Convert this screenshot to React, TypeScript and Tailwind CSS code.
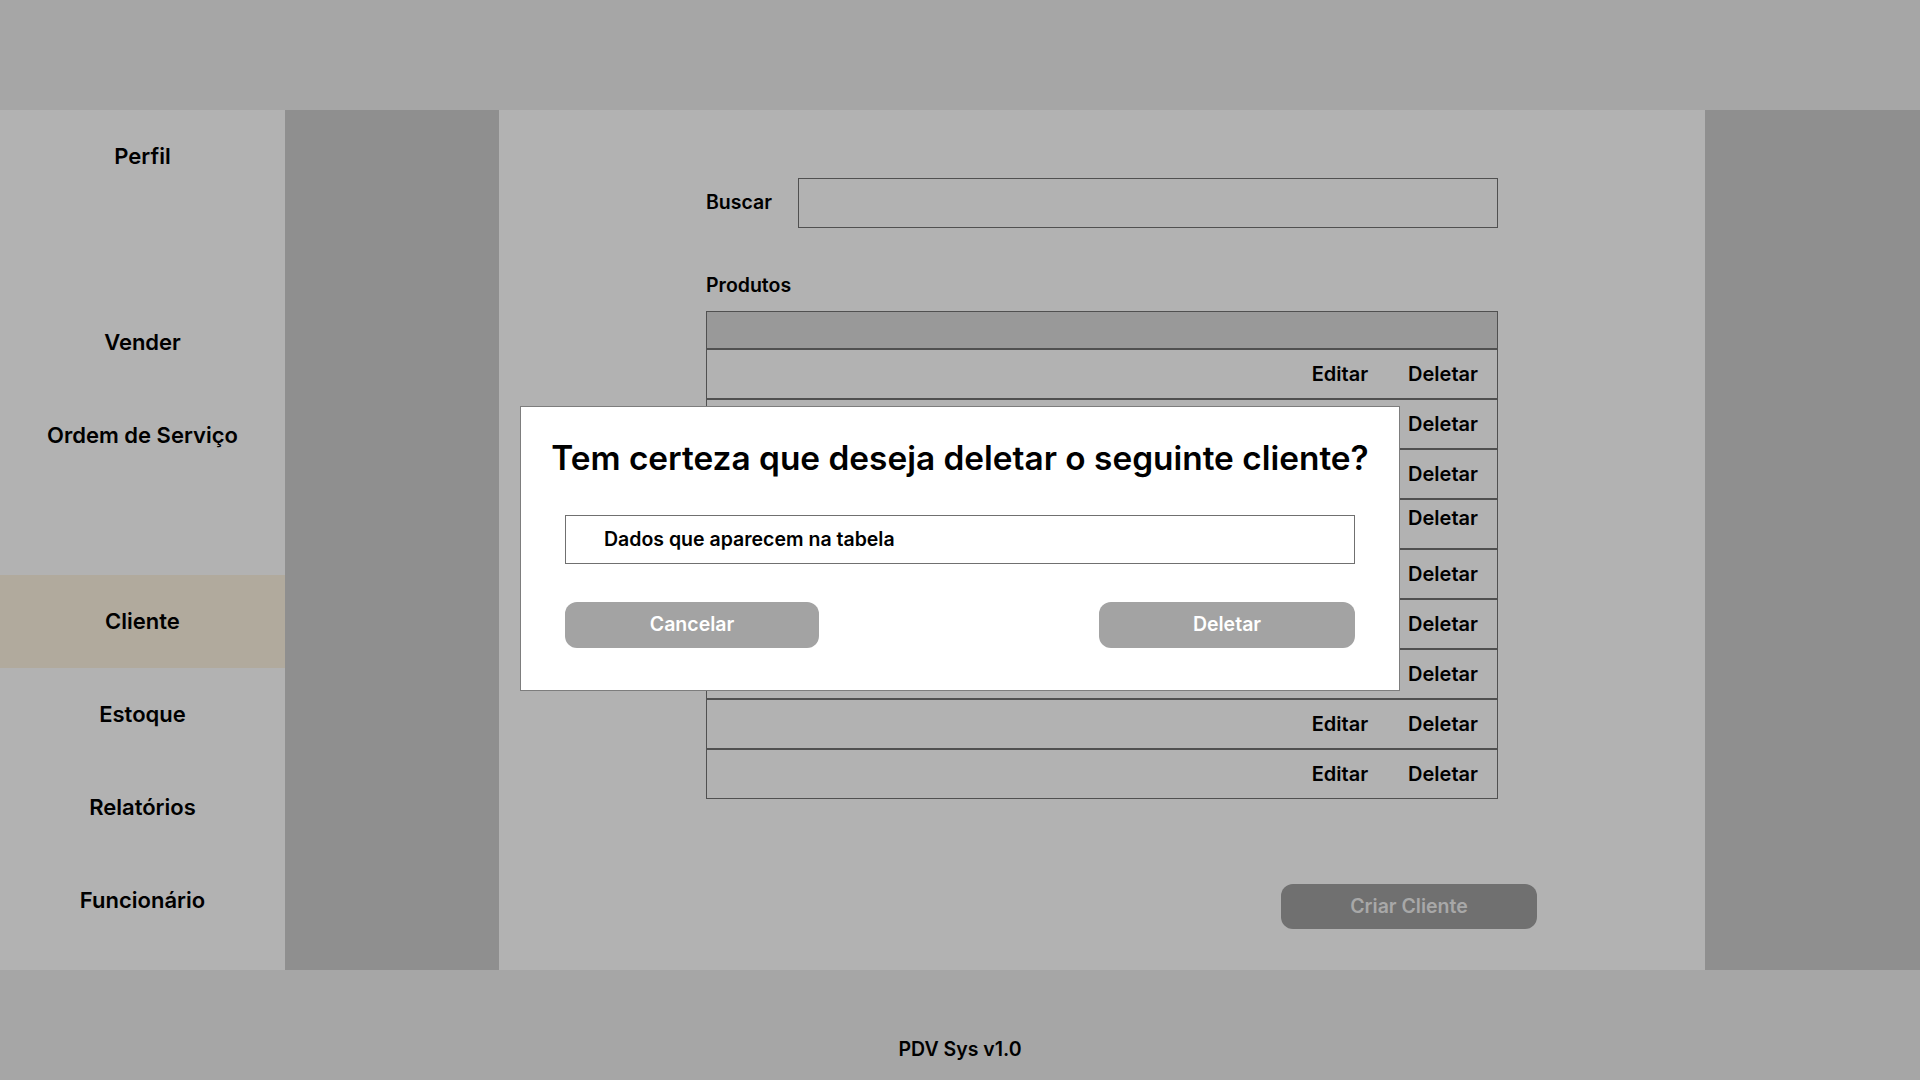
import React from "react";

type NavItem = {
	label: string;
	active?: boolean;
};

const navItems: NavItem[] = [
	{ label: "Perfil" },
	{ label: "" },
	{ label: "Vender" },
	{ label: "Ordem de Serviço" },
	{ label: "" },
	{ label: "Cliente", active: true },
	{ label: "Estoque" },
	{ label: "Relatórios" },
	{ label: "Funcionário" },
];

// rows hidden by the modal only show "Deletar" because the modal covers them
const rows = [0, 1, 2, 3, 4, 5, 6, 7, 8];

const Sidebar = () => {
	return (
		<aside className="flex w-[285px] shrink-0 flex-col bg-[#b2b2b2]">
			{navItems.map((item, i) => (
				<div
					key={i}
					className={`flex h-[93px] items-center justify-center text-[22px] font-semibold text-black ${
						item.active ? "bg-[#b1aa9d]" : ""
					}`}
				>
					{item.label}
				</div>
			))}
		</aside>
	);
};

const TableRow = ({ index }: { index: number }) => {
	return (
		<div
			className={`flex h-[50px] items-center justify-end gap-10 border-t-2 border-[#505050] pr-[19px] text-[20px] font-semibold text-black ${
				index === 3 ? "pb-3" : ""
			}`}
		>
			<span>Editar</span>
			<span>Deletar</span>
		</div>
	);
};

const DeleteModal = () => {
	return (
		<div className="absolute left-[21px] top-[296px] flex h-[285px] w-[880px] flex-col border border-[#7d7d7d] bg-white px-[44px]">
			<h2 className="-mx-[34px] whitespace-nowrap pt-[31px] text-center text-[33.4px] leading-[40px] font-semibold text-black">
				Tem certeza que deseja deletar o seguinte cliente?
			</h2>
			<div className="mt-[37px] flex h-[49px] items-center border border-[#707070] pl-[38px] text-[19.5px] font-semibold text-black">
				Dados que aparecem na tabela
			</div>
			<div className="mt-[38px] flex justify-between">
				<button className="h-[46px] w-[254px] rounded-xl bg-[#a3a3a3] text-[19.5px] font-semibold text-white">
					Cancelar
				</button>
				<button className="h-[46px] w-[256px] rounded-xl bg-[#a3a3a3] text-[19.5px] font-semibold text-white">
					Deletar
				</button>
			</div>
		</div>
	);
};

export default function App() {
	return (
		<div className="flex h-screen w-full flex-col font-['Inter','Noto_Sans',sans-serif]">
			<header className="h-[110px] shrink-0 bg-[#a6a6a6]" />

			<div className="flex h-[860px] shrink-0">
				<Sidebar />
				<div className="w-[214px] shrink-0 bg-[#8f8f8f]" />

				<main className="relative flex flex-1 flex-col bg-[#b2b2b2] pl-[207px] pr-[207px] pt-[68px]">
					<div className="flex items-center">
						<label className="w-[92px] text-[19.5px] font-semibold text-black">Buscar</label>
						<input className="h-[50px] flex-1 border border-[#505050] bg-transparent outline-none" />
					</div>

					<div className="mt-[43px] text-[19.5px] leading-7 font-semibold text-black">Produtos</div>

					<div className="mt-[12px] flex flex-col border border-[#505050]">
						<div className="h-[36px] bg-[#999999]" />
						{rows.map((r) => (
							<TableRow key={r} index={r} />
						))}
					</div>

					<div className="-mr-[39px] mt-[85px] flex justify-end">
						<button className="h-[45px] w-[256px] rounded-xl bg-[#707070] text-[19.5px] font-semibold text-[#a8a8a8]">
							Criar Cliente
						</button>
					</div>

					<DeleteModal />
				</main>

				<div className="w-[215px] shrink-0 bg-[#8f8f8f]" />
			</div>

			<footer className="flex h-[110px] shrink-0 justify-center bg-[#a6a6a6] pt-[67px]">
				<span className="text-[19.5px] leading-6 font-semibold text-black">PDV Sys v1.0</span>
			</footer>
		</div>
	);
}
